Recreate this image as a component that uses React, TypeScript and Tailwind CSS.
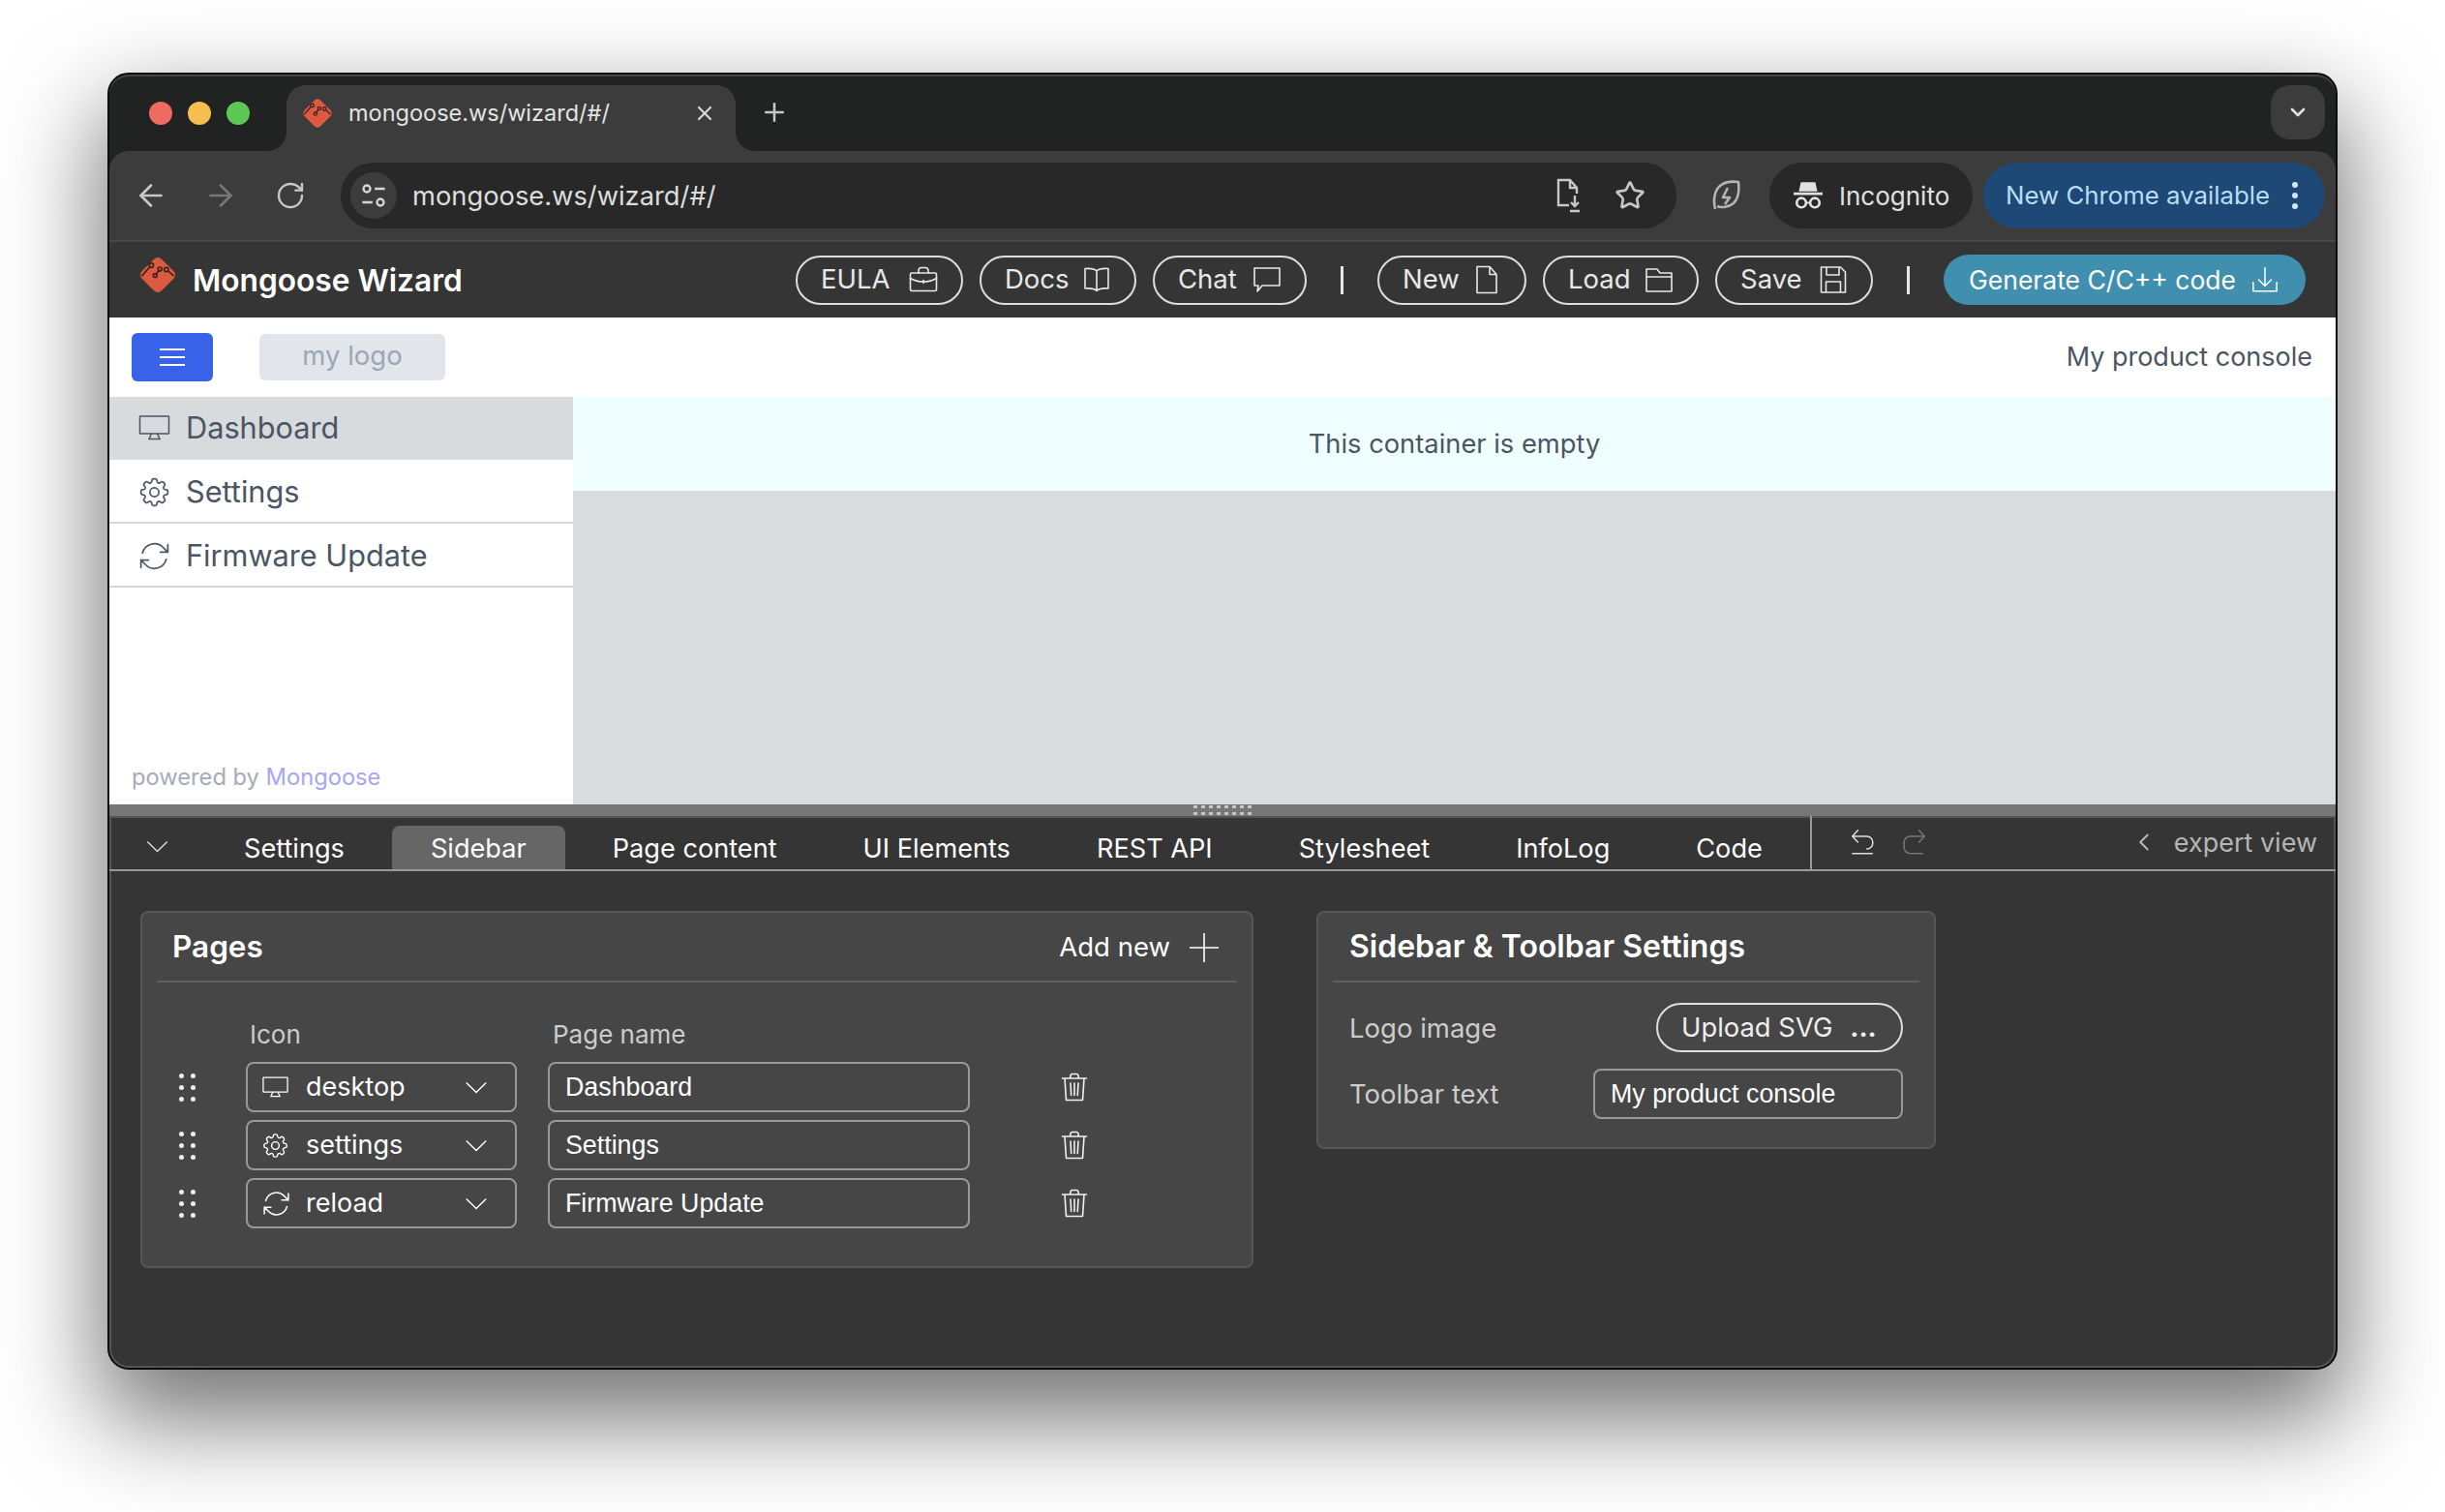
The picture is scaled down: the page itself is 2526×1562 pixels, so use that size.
import { ArrowLeft, ArrowRight, ChevronDown, ChevronLeft, Plus, RotateCw, Star, X } from "lucide-react";
import { HiOutlineArrowPath, HiOutlineCog8Tooth } from "react-icons/hi2";

type IconProps = { className?: string };

function Svg({ className, children }: IconProps & { children: React.ReactNode }) {
  return (
    <svg viewBox="0 0 30 30" fill="none" stroke="currentColor" strokeWidth="1.6" strokeLinecap="round" strokeLinejoin="round" className={className}>
      {children}
    </svg>
  );
}

const Briefcase = (p: IconProps) => (
  <Svg {...p}>
    <rect x="1.5" y="8" width="27" height="18.5" rx="1.5" />
    <path d="M10 8V5.5a3 3 0 0 1 3-3h4a3 3 0 0 1 3 3V8M1.5 13.5c4 2.5 8.5 3.5 13.5 3.5s9.5-1 13.5-3.5M15 15.500v3" />
  </Svg>
);
const Book = (p: IconProps) => (
  <Svg {...p}>
    <path d="M15 6c-2-2-6.500-3-12-2.500V24c5.500-.5 10 .5 12 2.500 2-2 6.500-3 12-2.500V3.500C21.500 3 17 4 15 6ZM15 6v20.500" />
  </Svg>
);
const Chat = (p: IconProps) => (
  <Svg {...p}>
    <path d="M2 3h26v18H10l-5 6 1-6H2V3Z" />
  </Svg>
);
const FileIcon = (p: IconProps) => (
  <Svg {...p}>
    <path d="M5 1.500h13l7 8V28.500H5V1.500ZM18 1.500V9.500h7" />
  </Svg>
);
const FolderIcon = (p: IconProps) => (
  <Svg {...p}>
    <path d="M2 27V4h11l3 4h12v19H2ZM2 12h26" />
  </Svg>
);
const Floppy = (p: IconProps) => (
  <Svg {...p}>
    <path d="M2.500 2h20l5 5v21h-25V2ZM8 2v8h13V2M7.500 28V17h15v11" />
  </Svg>
);
const Download = (p: IconProps) => (
  <Svg {...p}>
    <path d="M15 2v20M8 15l7 7 7-7M2 18v9.500h26V18" />
  </Svg>
);
const Trash = (p: IconProps) => (
  <Svg {...p}>
    <path d="M2.500 6h25M10.500 6l.5-3a2 2 0 0 1 2-1.500h4a2 2 0 0 1 2 1.500l.5 3M5 6l1.500 22.500h17L25 6M11 11l.7 12.500M15 11v12.500M19 11l-.7 12.500" />
  </Svg>
);
const Undo = (p: IconProps) => (
  <Svg {...p}>
    <path d="M9 2 3 8.500l6 6.500M3 8.500h16a6.500 6.500 0 0 1 6.500 6.500v1a6.500 6.500 0 0 1-6.500 6.500M3 27.500h22" />
  </Svg>
);
const Redo = (p: IconProps) => (
  <Svg {...p}>
    <path d="m21 2 6 6.500-6 6.500M27 8.500H11A6.500 6.500 0 0 0 4.500 15v6A6.500 6.500 0 0 0 11 27.500h14" />
  </Svg>
);

// flat monitor with a small stand, heroicons' one is too rounded
function Desktop({ className }: IconProps) {
  return (
    <svg viewBox="0 0 37 37" fill="none" stroke="currentColor" strokeWidth="1.500" className={className}>
      <rect x="3.500" y="6" width="30" height="18" rx="0.500" />
      <path d="M15.500 24l-2.500 5.500h11L21.500 24" />
    </svg>
  );
}

// lucide's chevron is too narrow at this size, the picture has a wide shallow one
function WideChevron({ className }: IconProps) {
  return (
    <svg viewBox="0 0 24 14" fill="none" stroke="currentColor" strokeWidth="1.500" className={className}>
      <path d="M1 1.500 12 12.500 23 1.500" />
    </svg>
  );
}

function MongooseLogo({ className }: IconProps) {
  return (
    <svg viewBox="0 0 40 40" className={className}>
      <rect x="7" y="7" width="26" height="26" rx="5" fill="#de5a3f" transform="rotate(45 20 20)" />
      <g fill="none" stroke="#3a2420" strokeWidth="1.500">
        <path d="M5 21 12.500 12.500" />
        <circle cx="14" cy="11" r="2" />
        <path d="M18 20l3-4" />
        <circle cx="17.500" cy="20.500" r="1.800" />
        <circle cx="22" cy="14.500" r="1.800" />
        <circle cx="28" cy="15" r="2" />
        <path d="M30 16.500 35 21" />
      </g>
    </svg>
  );
}

function HeaderButton({ label, icon, className }: { label: string; icon: React.ReactNode; className: string }) {
  return (
    <button className={`flex h-[51px] items-center justify-between rounded-full border-2 border-[#dedede] pl-[24px] pr-[24px] text-[27.500px] leading-none text-[#e8e8e8] ${className}`}>
      {label}
      {icon}
    </button>
  );
}

function Separator() {
  return <span className="mx-[18px] h-[29px] w-[3px] bg-[#e8e8e8]" />;
}

function SideItem({ label, icon, active, divider }: { label: string; icon: React.ReactNode; active?: boolean; divider?: boolean }) {
  return (
    <div className={`flex items-center gap-[14px] pl-[28px] text-[30.700px] text-[#4b5563] ${active ? "h-[65px] bg-[#d8dbde]" : ""} ${divider ? "h-[66px] border-b-2 border-[#d5d9de] pt-[2px]" : ""}`}>
      {icon}
      {label}
    </div>
  );
}

const pages = [
  { icon: <Desktop className="h-[31px] w-[31px]" />, name: "desktop", page: "Dashboard" },
  { icon: <HiOutlineCog8Tooth strokeWidth={1.1} className="h-[31px] w-[31px]" />, name: "settings", page: "Settings" },
  { icon: <HiOutlineArrowPath strokeWidth={1.1} className="h-[33px] w-[33px]" />, name: "reload", page: "Firmware Update" },
];

const tabs = ["Settings", "Sidebar", "Page content", "UI Elements", "REST API", "Stylesheet", "InfoLog", "Code"];

export default function App() {
  return (
    <div className="h-[1562px] w-[2526px] overflow-hidden bg-white pl-[111px] pt-[75px] [font-family:Inter,sans-serif]">
      <div className="flex h-[1340px] w-[2304px] flex-col overflow-hidden rounded-[22px] border-2 border-[#0d0d0d] bg-[#212322] shadow-[0_44px_100px_8px_rgba(0,0,0,0.55)]">
        {/* Chrome tab strip */}
        <div className="flex h-[79px] shrink-0 items-start rounded-t-[20px] pt-[11px] shadow-[inset_0_2px_0_#454545]">
          <div className="flex w-[183px] shrink-0 gap-[16px] pl-[41px] pt-[17px]">
            <span className="h-[24px] w-[24px] rounded-full bg-[#ef6a60]" />
            <span className="h-[24px] w-[24px] rounded-full bg-[#f5be4f]" />
            <span className="h-[24px] w-[24px] rounded-full bg-[#5ec654]" />
          </div>
          <div className="relative flex h-[68px] w-[464px] items-center rounded-t-[20px] bg-[#3c3c3c] pb-[10px] pl-[14px] pr-[20px] text-[23.500px] text-[#e3e3e3]">
            <span className="absolute -left-[20px] bottom-0 h-[20px] w-[20px] bg-[#3c3c3c]">
              <span className="block h-full w-full rounded-br-[20px] bg-[#212322]" />
            </span>
            <span className="absolute -right-[20px] bottom-0 h-[20px] w-[20px] bg-[#3c3c3c]">
              <span className="block h-full w-full rounded-bl-[20px] bg-[#212322]" />
            </span>
            <MongooseLogo className="mr-[14px] h-[36px] w-[36px] shrink-0" />
            <span className="flex-1">mongoose.ws/wizard/#/</span>
            <X className="h-[24px] w-[24px] text-[#d8d8d8]" strokeWidth={2.2} />
          </div>
          <Plus className="ml-[25px] mt-[13px] h-[30px] w-[30px] text-[#c8c8c8]" strokeWidth={2} />
          <div className="ml-auto mr-[11px] flex h-[56px] w-[56px] items-center justify-center rounded-[20px] bg-[#3c3c3c]">
            <ChevronDown className="h-[24px] w-[24px] text-[#e0e0e0]" strokeWidth={2.6} />
          </div>
        </div>

        {/* Chrome toolbar */}
        <div className="flex h-[94px] shrink-0 items-start rounded-t-[20px] border-b-2 border-[#474747] bg-[#3c3c3c] pt-[12px]">
          <div className="flex h-[68px] items-center gap-[36px] pl-[25px] text-[#c7c7c7]">
            <ArrowLeft className="h-[36px] w-[36px]" strokeWidth={1.800} />
            <ArrowRight className="h-[36px] w-[36px] text-[#777777]" strokeWidth={1.800} />
            <RotateCw className="ml-[2px] h-[32px] w-[32px]" strokeWidth={1.800} />
          </div>
          <div className="ml-[36px] flex h-[68px] w-[1380px] items-center rounded-full bg-[#282828] pl-[10px] pr-[32px]">
            <span className="flex h-[48px] w-[48px] items-center justify-center rounded-full bg-[#3c3c3c]">
              <svg viewBox="0 0 24 24" fill="none" stroke="#d5d5d5" strokeWidth="2" className="h-[28px] w-[28px]">
                <circle cx="6" cy="6" r="3" />
                <path d="M13 6h9M2 18h9" />
                <circle cx="18" cy="18" r="3" />
              </svg>
            </span>
            <span className="ml-[16px] flex-1 pt-[2px] text-[27.300px] text-[#dddddd]">mongoose.ws/wizard/#/</span>
            <svg viewBox="0 0 30 36" fill="none" stroke="#c7c7c7" strokeWidth="2.400" className="mr-[32px] h-[36px] w-[30px]">
              <path d="M15 28H4V2h12l7 8v6M16 2v8h7M21 18v10M17 25l4 4 4-4M16 34h10" />
            </svg>
            <Star className="h-[32px] w-[32px] text-[#c7c7c7]" strokeWidth={2} />
          </div>
          <svg viewBox="0 0 30 34" fill="none" stroke="#b5b5b5" strokeWidth="2.600" className="ml-[37px] mt-[16px] h-[36px] w-[30px]">
            <path d="M3 31c-2-8-1-17 3-22C11 3 20 2 27 3c1 8 0 17-5 22-5 4-13 5-17 3M16 9l-5 10h7l-5 7" strokeLinejoin="round" />
          </svg>
          <div className="ml-[29px] flex h-[68px] w-[210px] items-center gap-[16px] rounded-full bg-[#282828] pl-[24px] text-[26px] text-[#e0e0e0]">
            <svg viewBox="0 0 30 30" fill="#e0e0e0" className="h-[32px] w-[32px] shrink-0">
              <path d="M8 2h14l2 9H6l2-9ZM1 12h28v2.500H1z" />
              <circle cx="8.500" cy="22" r="4.500" fill="none" stroke="#e0e0e0" strokeWidth="2.500" />
              <circle cx="21.500" cy="22" r="4.500" fill="none" stroke="#e0e0e0" strokeWidth="2.500" />
              <path d="M12.500 21h5v2h-5z" />
            </svg>
            Incognito
          </div>
          <div className="ml-[11px] flex h-[68px] w-[353px] items-center rounded-full bg-[#1e4976] pl-[23px] text-[25.800px] text-[#b9dcf7]">
            New Chrome available
            <span className="ml-[23px] flex flex-col gap-[5px]">
              <span className="h-[6px] w-[6px] rounded-full bg-[#cfe6fa]" />
              <span className="h-[6px] w-[6px] rounded-full bg-[#cfe6fa]" />
              <span className="h-[6px] w-[6px] rounded-full bg-[#cfe6fa]" />
            </span>
          </div>
        </div>

        {/* Wizard header */}
        <div className="flex h-[78px] shrink-0 items-center bg-[#353535] pl-[28px] pr-[31px]">
          <MongooseLogo className="mb-[10px] h-[44px] w-[44px] shrink-0" />
          <span className="ml-[14px] pt-[2px] text-[31.700px] font-semibold text-white">Mongoose Wizard</span>
          <div className="ml-auto flex items-center gap-[17px]">
            <HeaderButton label="EULA" className="w-[173px]" icon={<Briefcase className="h-[30px] w-[30px]" />} />
            <HeaderButton label="Docs" className="w-[162px]" icon={<Book className="h-[30px] w-[30px]" />} />
            <HeaderButton label="Chat" className="w-[159px]" icon={<Chat className="h-[30px] w-[30px]" />} />
            <Separator />
            <HeaderButton label="New" className="w-[154px]" icon={<FileIcon className="h-[30px] w-[30px]" />} />
            <HeaderButton label="Load" className="w-[161px]" icon={<FolderIcon className="h-[30px] w-[30px]" />} />
            <HeaderButton label="Save" className="w-[163px]" icon={<Floppy className="h-[30px] w-[30px]" />} />
            <Separator />
            <button className="flex h-[52px] w-[374px] items-center justify-between rounded-full bg-[#418fae] pl-[26px] pr-[28px] text-[26.500px] leading-none text-white">
              Generate C/C++ code
              <Download className="h-[28px] w-[28px]" />
            </button>
          </div>
        </div>

        {/* App preview */}
        <div className="flex h-[82px] shrink-0 items-center justify-between bg-white pl-[23px] pr-[24px]">
          <div className="flex items-center gap-[48px]">
            <button className="flex h-[50px] w-[84px] items-center justify-center rounded-[6px] bg-[#3863e8]">
              <span className="flex w-[26px] flex-col gap-[6px]">
                <span className="h-[2px] bg-white" />
                <span className="h-[2px] bg-white" />
                <span className="h-[2px] bg-white" />
              </span>
            </button>
            <div className="flex h-[48px] w-[192px] items-center justify-center rounded-[6px] pb-[2px] bg-[#e2e5ea] text-[27.500px] text-[#9ba6b8]">my logo</div>
          </div>
          <span className="text-[27px] text-[#4b5563]">My product console</span>
        </div>
        <div className="flex h-[421px] shrink-0">
          <div className="flex w-[479px] shrink-0 flex-col bg-white">
            <SideItem label="Dashboard" active icon={<Desktop className="h-[37px] w-[37px]" />} />
            <SideItem label="Settings" divider icon={<HiOutlineCog8Tooth strokeWidth={1.100} className="h-[37px] w-[37px]" />} />
            <SideItem label="Firmware Update" divider icon={<HiOutlineArrowPath strokeWidth={1.100} className="h-[37px] w-[37px]" />} />
            <div className="mt-auto pb-[10px] pl-[23px] text-[23.700px] text-[#a5acb8]">
              powered by <span className="text-[#a5a6f6]">Mongoose</span>
            </div>
          </div>
          <div className="flex-1 bg-[#d8dcdf]">
            <div className="flex h-[97px] items-center justify-center bg-[#effefe] pt-[2px] text-[27.300px] text-[#4b5563]">This container is empty</div>
          </div>
        </div>

        {/* Splitter */}
        <div className="flex h-[12px] shrink-0 items-center justify-center bg-[#777777]">
          <div className="grid grid-cols-[repeat(8,1fr)] gap-[4px]">
            {Array.from({ length: 16 }).map((_, i) => (
              <span key={i} className="h-[3px] w-[4px] bg-[#c8c8c8]" />
            ))}
          </div>
        </div>

        {/* Editor panel */}
        <div className="flex min-h-0 flex-1 flex-col rounded-b-[20px] bg-[#353535] shadow-[inset_0_0_0_2px_#555555]">
          <div className="flex h-[57px] shrink-0 items-end border-b-2 border-[#999999] text-[27.150px] leading-none text-white">
            <div className="flex h-[55px] w-[99px] shrink-0 items-center justify-center pt-[8px]">
              <WideChevron className="h-[13px] w-[23px] text-[#dddddd]" />
            </div>
            <div className="flex gap-[9px]">
              {tabs.map((t) => (
                <div key={t} className={`flex h-[45px] items-center rounded-t-[8px] px-[40px] pt-[2px] ${t === "Sidebar" ? "bg-[#666666]" : ""}`}>
                  {t}
                </div>
              ))}
            </div>
            <div className="ml-auto flex h-[55px] w-[543px] items-center border-l-2 border-[#999999] pb-[1px] pl-[39px] pr-[19px]">
              <Undo className="h-[28px] w-[28px] text-[#e0e0e0]" />
              <Redo className="ml-[24px] h-[28px] w-[28px] text-[#777777]" />
              <ChevronLeft className="ml-auto h-[30px] w-[30px] text-[#bbbbbb]" strokeWidth={1.500} />
              <span className="ml-[16px] text-[27px] text-[#b5b5b5]">expert view</span>
            </div>
          </div>

          <div className="flex items-start gap-[65px] pl-[32px] pt-[41px]">
            {/* Pages card */}
            <div className="h-[369px] w-[1150px] rounded-[8px] border-2 border-[#565656] bg-[#464646] px-[15px]">
              <div className="flex h-[72px] items-center justify-between border-b-2 border-[#5f5f5f] pl-[16px] pr-[19px] text-white">
                <span className="text-[31.500px] font-semibold">Pages</span>
                <span className="flex items-center gap-[20px] pt-[1px] text-[27.500px]">
                  Add new
                  <svg viewBox="0 0 30 30" stroke="currentColor" strokeWidth="1.600" className="h-[30px] w-[30px]">
                    <path d="M15 0v30M0 15h30" />
                  </svg>
                </span>
              </div>
              <div className="flex pt-[41px] text-[26px] leading-none text-[#cccccc]">
                <span className="ml-[96px] w-[313px]">Icon</span>
                <span>Page name</span>
              </div>
              <div className="mt-[15px] flex flex-col gap-[8px]">
                {pages.map((p) => (
                  <div key={p.name} className="flex items-center">
                    <span className="ml-[23px] grid w-[69px] grid-cols-[5px_5px] gap-x-[7px] gap-y-[7px]">
                      {Array.from({ length: 6 }).map((_, i) => (
                        <span key={i} className="h-[5px] w-[5px] rounded-full bg-[#eeeeee]" />
                      ))}
                    </span>
                    <div className="flex h-[52px] w-[280px] items-center rounded-[8px] border-2 border-[#999999] pl-[13px] pr-[28px] text-[27px] text-white">
                      <span className="flex w-[47px] shrink-0">{p.icon}</span>
                      <span className="flex-1">{p.name}</span>
                      <WideChevron className="h-[13px] w-[24px]" />
                    </div>
                    <div className="ml-[32px] flex h-[52px] w-[436px] items-center rounded-[8px] border-2 border-[#999999] pl-[16px] text-[26.800px] text-white [font-family:'Liberation_Sans',sans-serif]">
                      {p.page}
                    </div>
                    <Trash className="ml-[93px] h-[30px] w-[30px] text-[#f0f0f0]" />
                  </div>
                ))}
              </div>
            </div>

            {/* Sidebar settings card */}
            <div className="h-[246px] w-[640px] rounded-[8px] border-2 border-[#565656] bg-[#464646] px-[15px]">
              <div className="flex h-[72px] items-center border-b-2 border-[#5f5f5f] px-[17px] text-[32px] font-semibold text-white">
                Sidebar &amp; Toolbar Settings
              </div>
              <div className="flex flex-col gap-[17px] pl-[17px] pr-[17px] pt-[21px] text-[27.500px] text-[#cccccc]">
                <div className="flex h-[51px] items-center justify-between">
                  <span className="pt-[2px]">Logo image</span>
                  <button className="flex h-[51px] w-[255px] items-center rounded-full border-2 border-[#e0e0e0] pl-[24px] text-[27.400px] leading-none text-[#eeeeee]">
                    Upload SVG
                    <span className="ml-[18px] font-bold">...</span>
                  </button>
                </div>
                <div className="flex h-[52px] items-center justify-between">
                  <span className="pt-[1px]">Toolbar text</span>
                  <div className="flex h-[52px] w-[320px] items-center rounded-[8px] border-2 border-[#999999] pl-[16px] text-[26.800px] text-white [font-family:'Liberation_Sans',sans-serif]">
                    My product console
                  </div>
                </div>
              </div>
            </div>
          </div>
        </div>
      </div>
    </div>
  );
}
